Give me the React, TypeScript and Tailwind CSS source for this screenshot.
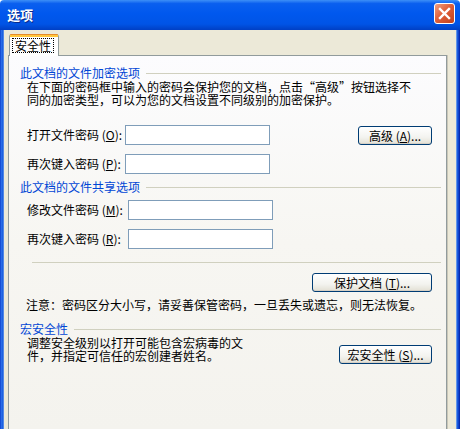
const font = "font-['Noto_Sans_CJK_SC',sans-serif]"

function GroupHeader({ title }: { title: string }) {
  return (
    <div className="flex h-[14px] items-center pl-[11px] pr-[5px]">
      <span className="text-[12px] leading-[14px] text-[#0046d5]">{title}</span>
      <div className="ml-[6px] h-px flex-1 bg-[#d0d0bf]" />
    </div>
  )
}

function XpButton({ children, width }: { children: React.ReactNode; width: string }) {
  return (
    <button
      type="button"
      className={`h-[19px] ${width} rounded-[3px] border border-[#003c74] bg-[linear-gradient(#ffffff,#f3f3ef_60%,#e3e0d4)] text-[12px] leading-[17px] text-black shadow-[inset_0_-1px_0_#d6d0c5]`}
    >
      {children}
    </button>
  )
}

function Field({ label, hotkey, labelWidth }: { label: string; hotkey: string; labelWidth: string }) {
  return (
    <div className="flex h-[20px] items-center">
      <span className={`${labelWidth} whitespace-nowrap text-[12px] leading-[14px]`}>
        {label} (<u>{hotkey}</u>):
      </span>
      <div className="h-[20px] w-[145px] border border-[#7f9db9] bg-white" />
    </div>
  )
}

export default function App() {
  return (
    <div className={`flex h-[429px] w-[460px] flex-col overflow-hidden bg-white ${font} text-black`}>
      {/* title bar */}
      <div className="flex h-[30px] shrink-0 items-center justify-between rounded-t-[4px] bg-[linear-gradient(#3d8ff7,#0a5fef_12%,#0058ee_45%,#0054e6_80%,#003fc4)] pl-[7px] pr-[5px]">
        <span className="text-[13px] font-bold leading-[16px] text-white [text-shadow:1px_1px_0_#0a2a8a]">选项</span>
        <button
          type="button"
          className="mb-[3px] flex h-[21px] w-[21px] items-center justify-center rounded-[3px] border border-white bg-[linear-gradient(135deg,#f0a080,#e0603a_45%,#c0401c)]"
        >
          <svg width="13" height="13" viewBox="0 0 13 13">
            <path d="M2 2 L11 11 M11 2 L2 11" stroke="white" strokeWidth="2.4" strokeLinecap="square" />
          </svg>
        </button>
      </div>

      <div className="flex flex-1">
        <div className="w-[4px] bg-[linear-gradient(to_right,#0a3bcb,#2a6ee8,#1c5fe0,#6f9fe6)]" />

        <div className="flex flex-1 flex-col bg-[#ece9d8] pl-[4px] pr-[9px] pt-[4px]">
          {/* tab */}
          <div className="relative z-10 -mb-px ml-[1px] flex h-[22px] w-[50px] flex-col rounded-t-[3px] border-x border-[#919b9c] bg-white">
            <div className="h-[1px] rounded-t-[3px] bg-[#e68b2c]" />
            <div className="h-[2px] bg-[#ffc73c]" />
            <div className="flex flex-1 items-start px-[2px] pt-[1px]">
              <span className="border border-dotted border-black px-[2px] text-[12px] leading-[13px]">安全性</span>
            </div>
          </div>

          {/* panel */}
          <div className="flex w-[439px] flex-1 flex-col border-x border-t border-[#919b9c] bg-[linear-gradient(#fcfcfe,#f7f6f2_50%,#f4f3ee)] shadow-[1px_0_0_#c9c6b8]">
            <div className="mt-[10px]">
              <GroupHeader title="此文档的文件加密选项" />
            </div>
            <div className="pl-[18px] text-[12px] leading-[13px]">
              在下面的密码框中输入的密码会保护您的文档，点击“高级”按钮选择不
              <br />
              同的加密类型，可以为您的文档设置不同级别的加密保护。
            </div>

            <div className="mt-[19px] flex items-center justify-between pl-[18px] pr-[14px]">
              <Field label="打开文件密码" hotkey="O" labelWidth="w-[98px]" />
              <XpButton width="w-[74px]">
                高级 (<u>A</u>)...
              </XpButton>
            </div>
            <div className="mt-[9px] pl-[18px]">
              <Field label="再次键入密码" hotkey="P" labelWidth="w-[98px]" />
            </div>

            <div className="mt-[6px]">
              <GroupHeader title="此文档的文件共享选项" />
            </div>
            <div className="mt-[6px] pl-[18px]">
              <Field label="修改文件密码" hotkey="M" labelWidth="w-[101px]" />
            </div>
            <div className="mt-[9px] pl-[18px]">
              <Field label="再次键入密码" hotkey="R" labelWidth="w-[101px]" />
            </div>

            <div className="ml-[23px] mr-[5px] mt-[13px] h-px bg-[#d0d0bf]" />

            <div className="mt-[10px] flex justify-end pr-[14px]">
              <XpButton width="w-[120px]">
                保护文档 (<u>T</u>)...
              </XpButton>
            </div>

            <div className="mt-[6px] pl-[17px] text-[12px] leading-[14px]">
              注意：密码区分大小写，请妥善保管密码，一旦丢失或遗忘，则无法恢复。
            </div>

            <div className="mt-[10px]">
              <GroupHeader title="宏安全性" />
            </div>
            <div className="flex items-start justify-between pl-[18px] pr-[14px]">
              <div className="text-[12px] leading-[13px]">
                调整安全级别以打开可能包含宏病毒的文
                <br />
                件，并指定可信任的宏创建者姓名。
              </div>
              <div className="mt-[5px]">
                <XpButton width="w-[93px]">
                  宏安全性 (<u>S</u>)...
                </XpButton>
              </div>
            </div>
          </div>
        </div>

        <div className="w-[4px] bg-[linear-gradient(to_right,#8bb4ee,#1c5fe0,#0d3fc8,#001ea0)]" />
      </div>
    </div>
  )
}
